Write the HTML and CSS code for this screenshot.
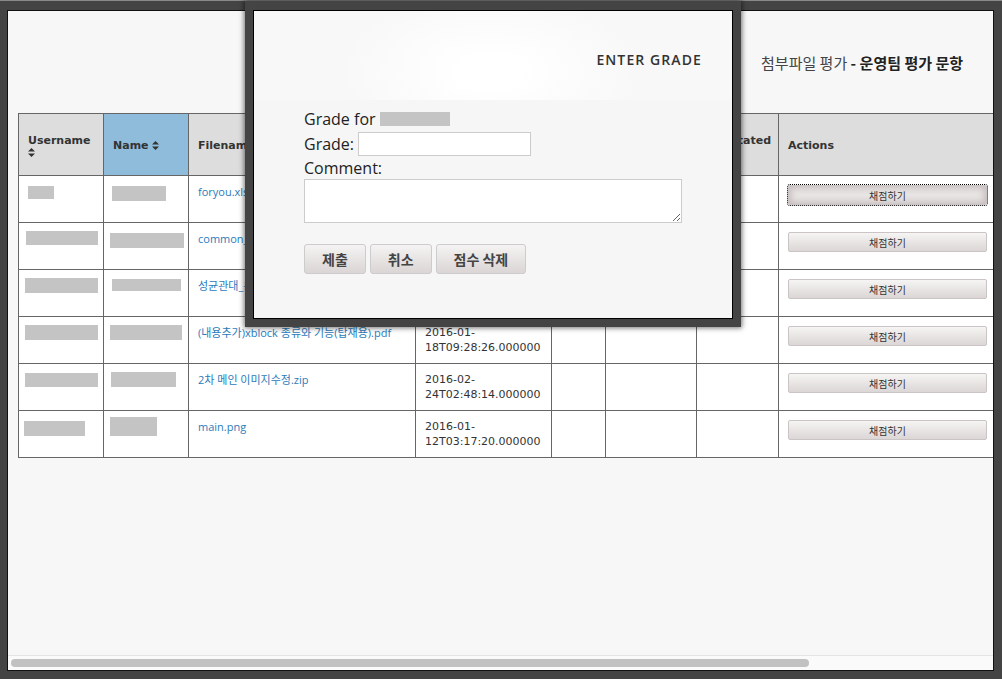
FILE: index.html
```html
<html>
  <head>
    <meta charset="utf-8">
    <link rel="stylesheet" href="styles.css">
  </head>
  <body>
    <div class="frame">
      <div class="view">
        <div class="page-head">
          <h1 class="title">첨부파일 평가<b> - 운영팀 평가 문항</b></h1>
        </div>
        <table class="submissions">
          <colgroup>
            <col style="width:85px"><col style="width:85px"><col style="width:227px"><col style="width:136px">
            <col style="width:54px"><col style="width:91px"><col style="width:82px"><col style="width:218px">
          </colgroup>
          <thead>
            <tr>
              <th>Username <svg class="sort" width="7" height="9" viewBox="0 0 7 9"><path d="M0 3.6L3.5 0 7 3.6zM0 5.4h7L3.5 9z"/></svg></th>
              <th class="sorted">Name <svg class="sort" width="7" height="9" viewBox="0 0 7 9"><path d="M0 3.6L3.5 0 7 3.6zM0 5.4h7L3.5 9z"/></svg></th>
              <th>Filename <svg class="sort" width="7" height="9" viewBox="0 0 7 9"><path d="M0 3.6L3.5 0 7 3.6zM0 5.4h7L3.5 9z"/></svg></th>
              <th>Uploaded <svg class="sort" width="7" height="9" viewBox="0 0 7 9"><path d="M0 3.6L3.5 0 7 3.6zM0 5.4h7L3.5 9z"/></svg></th>
              <th>Grade</th>
              <th>Comments</th>
              <th>Annotated <svg class="sort" width="7" height="9" viewBox="0 0 7 9"><path d="M0 3.6L3.5 0 7 3.6zM0 5.4h7L3.5 9z"/></svg></th>
              <th>Actions</th>
            </tr>
          </thead>
          <tbody>
            <tr>
              <td><span class="redact" style="width:26px;height:13px;margin:2px 0 0 0"></span></td>
              <td><span class="redact" style="width:54px;height:15px;margin:2px 0 0 -1px"></span></td>
              <td><a href="#">foryou.xlsx</a></td>
              <td>2016-01-<br>15T04:12:09.000000</td>
              <td></td><td></td><td></td>
              <td><button class="grade-btn focused">채점하기</button></td>
            </tr>
            <tr>
              <td><span class="redact" style="width:72px;height:14px;margin:0 0 0 -2px"></span></td>
              <td><span class="redact" style="width:74px;height:15px;margin:2px 0 0 -3px"></span></td>
              <td><a href="#">common_bg.png</a></td>
              <td>2016-01-<br>15T06:40:51.000000</td>
              <td></td><td></td><td></td>
              <td><button class="grade-btn">채점하기</button></td>
            </tr>
            <tr>
              <td><span class="redact" style="width:73px;height:15px;margin:0 0 0 -3px"></span></td>
              <td><span class="redact" style="width:69px;height:12px;margin:1px 0 0 -1px"></span></td>
              <td><a href="#">성균관대_본교소개.pptx</a></td>
              <td>2016-01-<br>17T11:03:44.000000</td>
              <td></td><td></td><td></td>
              <td><button class="grade-btn">채점하기</button></td>
            </tr>
            <tr>
              <td><span class="redact" style="width:73px;height:15px;margin:0 0 0 -3px"></span></td>
              <td><span class="redact" style="width:72px;height:15px;margin:0 0 0 -3px"></span></td>
              <td><a href="#">(내용추가)xblock 종류와 기능(탑재용).pdf</a></td>
              <td>2016-01-<br>18T09:28:26.000000</td>
              <td></td><td></td><td></td>
              <td><button class="grade-btn">채점하기</button></td>
            </tr>
            <tr>
              <td><span class="redact" style="width:73px;height:14px;margin:1px 0 0 -3px"></span></td>
              <td><span class="redact" style="width:65px;height:15px;margin:0 0 0 -2px"></span></td>
              <td><a href="#">2차 메인 이미지수정.zip</a></td>
              <td>2016-02-<br>24T02:48:14.000000</td>
              <td></td><td></td><td></td>
              <td><button class="grade-btn">채점하기</button></td>
            </tr>
            <tr>
              <td><span class="redact" style="width:61px;height:15px;margin:2px 0 0 -4px"></span></td>
              <td><span class="redact" style="width:47px;height:19px;margin:-2px 0 0 -3px"></span></td>
              <td><a href="#">main.png</a></td>
              <td>2016-01-<br>12T03:17:20.000000</td>
              <td></td><td></td><td></td>
              <td><button class="grade-btn">채점하기</button></td>
            </tr>
          </tbody>
        </table>
      </div>
      <div class="hscroll"><div class="thumb"></div></div>
    </div>

    <div class="modal">
      <div class="modal-inner">
        <div class="modal-head">
          <div class="glow"></div>
          <h2>ENTER GRADE</h2>
        </div>
        <form class="grade-form">
          <div class="row">Grade for <span class="redact" style="width:70px;height:14px"></span></div>
          <div class="row row-grade"><label>Grade:</label><input type="text"></div>
          <div class="row"><label>Comment:</label></div>
          <textarea></textarea>
          <div class="form-actions">
            <button type="button">제출</button>
            <button type="button">취소</button>
            <button type="button">점수 삭제</button>
          </div>
        </form>
      </div>
    </div>
  </body>
</html>
```

FILE: styles.css
```css
html, body {
  margin: 0;
}
body {
  background: #444;
  border-top: 1px solid #8a8a8a;
  padding: 9px 8px 8px 7px;
  font-family: "Open Sans", "Noto Sans CJK KR", sans-serif;
}

/* page behind the dialog */
.frame {
  box-sizing: border-box;
  height: 661px;
  border: 1px solid #111;
  background: #f7f7f7;
  display: flex;
  flex-direction: column;
}
.view {
  flex: 1;
  overflow: hidden;
}
.page-head {
  height: 102px;
  display: flex;
  align-items: center;
  justify-content: flex-end;
  padding-right: 30px;
}
.title {
  margin: 0;
  font-family: "Noto Sans CJK KR", sans-serif;
  font-size: 15px;
  font-weight: normal;
  color: #444;
}
.title b {
  color: #222;
}

.submissions {
  margin-left: 10px;
  width: 978px;
  table-layout: fixed;
  border-collapse: collapse;
  border: 1px solid #666;
}
.submissions thead tr {
  height: 62px;
}
.submissions th,
.submissions td {
  border: 1px solid #666;
  padding: 8px 9px;
  text-align: left;
  font-family: "DejaVu Sans", "Noto Sans CJK KR", sans-serif;
  font-size: 11px;
  line-height: 15px;
  color: #333;
}
.submissions th {
  background: #ddd;
  padding: 16px 9px 15px;
  vertical-align: middle;
  font-weight: bold;
}
.submissions th.sorted {
  background: #8fbcdb;
}
.submissions td {
  background: #fff;
  vertical-align: top;
  height: 30px;
}
.sort {
  fill: #333;
  vertical-align: -1px;
}
.submissions a {
  font-family: "Open Sans", "Noto Sans CJK KR", sans-serif;
  font-size: 11px;
  color: #2b7bba;
  text-decoration: none;
}
.redact {
  display: block;
  background: #c4c4c4;
}
.grade-btn {
  display: block;
  width: 100%;
  height: 20px;
  margin-top: 1px;
  padding: 0;
  border: 1px solid #cbc4c4;
  border-radius: 2px;
  background: linear-gradient(#f6f4f4, #dcd6d6);
  font-family: "Noto Sans CJK KR", sans-serif;
  font-size: 10px;
  color: #333;
}
.grade-btn.focused {
  outline: 1px dotted #000;
  background: #e9e5e5;
  box-shadow: inset 0 0 7px 2px #c5bcbc;
}

.hscroll {
  height: 15px;
  box-sizing: border-box;
  border-top: 1px solid #e4e4e4;
  background: #fafafa;
  padding: 3px 0 0 3px;
}
.thumb {
  width: 798px;
  height: 8px;
  border-radius: 4px;
  background: #c1c1c1;
}

/* grading dialog */
.modal {
  position: absolute;
  top: 1px;
  left: 245px;
  width: 496px;
  box-sizing: border-box;
  padding: 9px 8px 8px 8px;
  background: #444;
  box-shadow: 0 0 5px 1px rgba(0,0,0,.55);
}
.modal-inner {
  box-sizing: border-box;
  height: 309px;
  border: 1px solid #000;
  background: #f6f6f6;
}
.modal-head {
  position: relative;
  height: 89px;
  display: flex;
  align-items: center;
  justify-content: flex-end;
  padding: 7px 30px 0 0;
  box-sizing: border-box;
  background: #f8f8f8;
}
.glow {
  position: absolute;
  left: 71px;
  top: 0;
  width: 307px;
  height: 89px;
  background: radial-gradient(ellipse 150px 80px at 165px 61px, #fff 20%, #f8f8f8 100%);
}
.modal-head h2 {
  position: relative;
  margin: 0;
  font-size: 14px;
  font-weight: 600;
  letter-spacing: 1.1px;
  color: #333;
}
.grade-form {
  margin: 0;
  padding: 7px 0 0 50px;
  font-size: 16px;
  color: #222;
}
.row {
  height: 24px;
  display: flex;
  align-items: center;
  gap: 4px;
}
.row-grade {
  margin-top: 1px;
}
.row-grade input {
  box-sizing: border-box;
  width: 173px;
  height: 24px;
  border: 1px solid #ccc;
  background: #fff;
}
.grade-form textarea {
  display: block;
  box-sizing: border-box;
  width: 378px;
  height: 44px;
  margin-top: -1px;
  border: 1px solid #ccc;
  background: #fff;
}
.form-actions {
  display: flex;
  gap: 4px;
  margin-top: 21px;
}
.form-actions button {
  height: 30px;
  padding: 0 17px;
  border: 1px solid #ccc;
  border-radius: 3px;
  background: linear-gradient(#f5f3f3, #dbd5d5);
  font-family: "Noto Sans CJK KR", sans-serif;
  font-size: 14px;
  font-weight: bold;
  color: #444;
}
```
